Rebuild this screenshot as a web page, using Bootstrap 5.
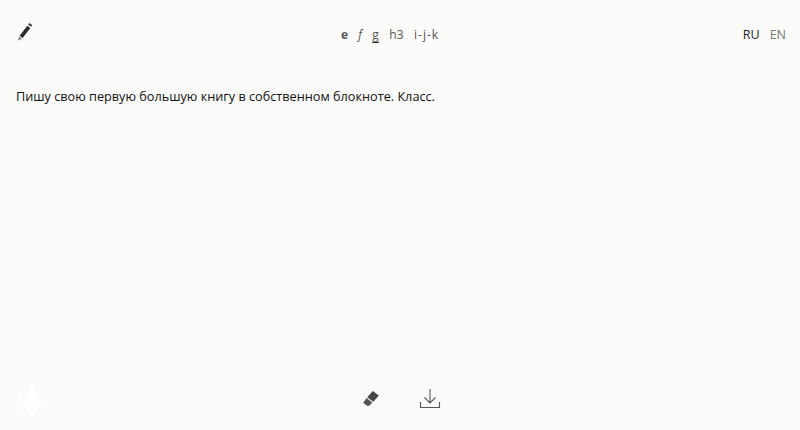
<!DOCTYPE html>
<html lang="ru">
<head>
    <meta charset="UTF-8">
    <meta name="viewport" content="width=device-width, initial-scale=1.0">
    <title>Блокнот</title>
    <link href="https://cdn.jsdelivr.net/npm/bootstrap@5.3.0/dist/css/bootstrap.min.css" rel="stylesheet">
    <style>
        html, body {
            height: 100%;
            overflow: hidden;
        }
        body {
            background-color: #fafaf8;
            font-family: "Open Sans", "Noto Sans", sans-serif;
            color: #111;
        }
        .page-wrap {
            height: 430px;
        }
        .top-bar {
            height: 64px;
            padding: 0 14px 0 16px;
        }
        .top-bar > div {
            width: 120px;
        }
        .pencil-btn {
            margin-top: -3px;
        }
        .style-picker {
            font-size: 12px;
            line-height: 15px;
            color: #555;
            gap: 10px;
            letter-spacing: .3px;
            margin: 6px 22px 0 0;
        }
        .style-picker a, .lang-picker a {
            color: inherit;
            text-decoration: none;
        }
        .style-picker .cur {
            border-bottom: 1px solid #333;
        }
        .style-picker .spaced {
            letter-spacing: 1px;
        }
        .lang-picker {
            font-size: 12.5px;
            gap: 10px;
            color: #777;
            margin-top: 6px;
        }
        .lang-picker .cur {
            color: #222;
        }
        .note-text {
            margin: 22px 0 0 16px;
            font-size: 12.7px;
            line-height: 20px;
        }
        .bottom-bar {
            height: 50px;
            padding: 0 0 12px 0;
            position: relative;
        }
        .logo-mark {
            position: absolute;
            left: 15px;
            top: 3px;
        }
        .tools {
            gap: 38px;
            margin-left: 1px;
        }
    </style>
</head>
<body>
    <div class="page-wrap d-flex flex-column">
        <div class="top-bar d-flex align-items-center justify-content-between">
            <div class="pencil-btn">
                <svg width="18" height="20" viewBox="0 0 18 20">
                    <path d="M13.300 1l3 2.200-1.200 1.600-3-2.200z" fill="#333"/>
                    <path d="M11.300 3.700l3 2.200-7.600 10.100-3-2.200z" fill="#2a2a2a"/>
                    <path d="M3.300 14.500l2.600 1.900-4 2.300z" fill="#777"/>
                </svg>
            </div>
            <div class="style-picker d-flex justify-content-center flex-shrink-0">
                <a href="#" class="fw-bold">e</a>
                <a href="#" class="fst-italic">f</a>
                <a href="#" class="cur">g</a>
                <a href="#">h3</a>
                <a href="#" class="spaced">i-j-k</a>
            </div>
            <div class="lang-picker d-flex justify-content-end">
                <a href="#" class="cur">RU</a>
                <a href="#">EN</a>
            </div>
        </div>
        <p class="note-text">Пишу свою первую большую книгу в собственном блокноте. Класс.</p>
        <div class="bottom-bar mt-auto d-flex justify-content-center align-items-center">
            <svg class="logo-mark" width="30" height="40" viewBox="0 0 30 40">
                <path d="M17 2l10 16-10 17-10-17z" fill="#fff"/>
                <path d="M9 6l-7 12 8 14-5-14z" fill="#fff"/>
            </svg>
            <div class="tools d-flex align-items-center">
                <svg width="20" height="18" viewBox="0 0 20 18">
                    <path d="M11.800 1l6 4.500-5.500 6.200-6-4.500z" fill="#444"/>
                    <path d="M5.500 8l5.800 4.400-2.800 3.300-2.500 0-3.800-2.900z" fill="#555"/>
                </svg>
                <svg width="22" height="22" viewBox="0 0 22 22" fill="none" stroke="#555" stroke-width="1.100">
                    <path d="M11 1v14M5.500 9.500l5.500 5.500 5.500-5.500"/>
                    <path d="M1.500 14v5.500h19V14"/>
                </svg>
            </div>
        </div>
    </div>
    <script src="https://cdn.jsdelivr.net/npm/bootstrap@5.3.0/dist/js/bootstrap.bundle.min.js"></script>
</body>
</html>
